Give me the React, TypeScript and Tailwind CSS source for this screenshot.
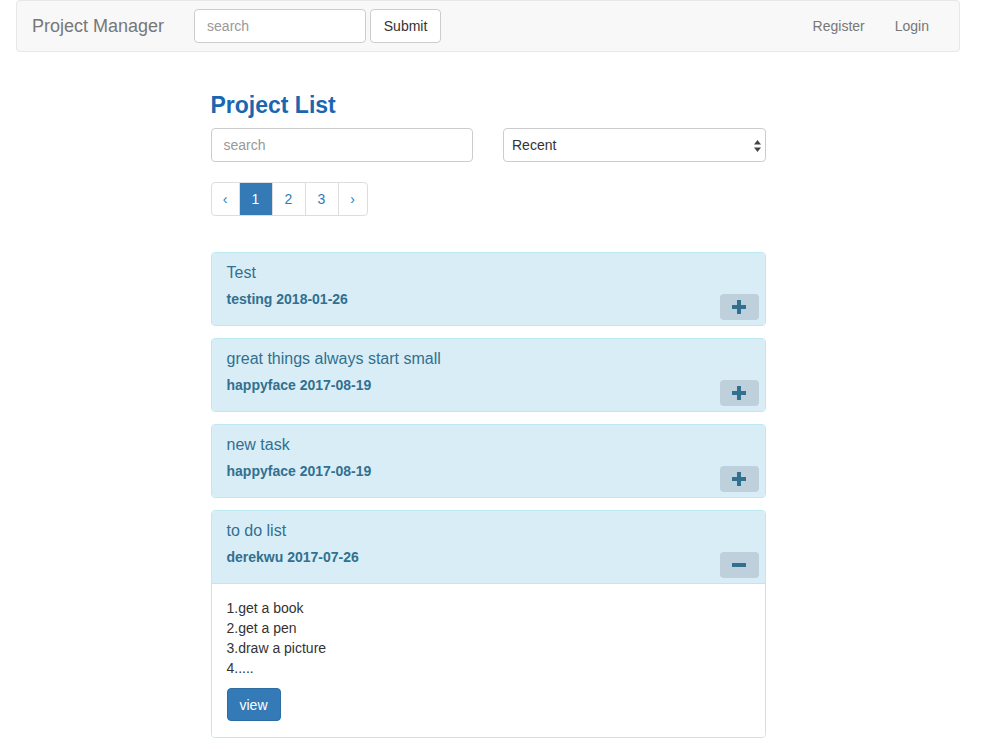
import React from 'react';

type Project = {
  title: string;
  author: string;
  date: string;
  open?: boolean;
  body?: string[];
};

const PROJECTS: Project[] = [
  { title: 'Test', author: 'testing', date: '2018-01-26' },
  { title: 'great things always start small', author: 'happyface', date: '2017-08-19' },
  { title: 'new task', author: 'happyface', date: '2017-08-19' },
  {
    title: 'to do list',
    author: 'derekwu',
    date: '2017-07-26',
    open: true,
    body: ['1.get a book', '2.get a pen', '3.draw a picture', '4.....'],
  },
];

const ToggleIcon: React.FC<{ open?: boolean }> = ({ open }) => (
  <svg width="14" height="14" viewBox="0 0 14 14" fill="#31708f">
    <rect x="0" y="5" width="14" height="4" />
    {!open && <rect x="5" y="0" width="4" height="14" />}
  </svg>
);

const Navbar: React.FC = () => (
  <nav className="mx-4 h-[52px] bg-[#f8f8f8] border border-[#e7e7e7] rounded-[4px] flex items-center">
    <span className="pl-[15px] pr-[30px] text-[18px] text-[#777]">Project Manager</span>
    <input
      placeholder="search"
      className="w-[172px] h-[34px] px-3 text-[14px] text-[#555] bg-white border border-[#ccc] rounded-[4px] placeholder:text-[#999] outline-none"
    />
    <button className="ml-1 h-[34px] w-[71px] text-[14px] text-[#333] bg-white border border-[#ccc] rounded-[4px]">
      Submit
    </button>
    <div className="ml-auto flex text-[14px] text-[#777]">
      <a className="px-[15px] leading-[20px]">Register</a>
      <a className="px-[15px] mr-[15px] leading-[20px]">Login</a>
    </div>
  </nav>
);

const Pagination: React.FC = () => {
  const base = 'h-[34px] flex items-center justify-center border border-[#ddd] -ml-px first:ml-0 text-[14px]';
  return (
    <div className="flex mt-5">
      <span className={`${base} w-[29px] rounded-l-[4px] text-[#337ab7] text-[12px]`}>‹</span>
      <span className={`${base} w-[34px] bg-[#337ab7] border-[#337ab7] text-white`}>1</span>
      <span className={`${base} w-[34px] text-[#337ab7]`}>2</span>
      <span className={`${base} w-[34px] text-[#337ab7]`}>3</span>
      <span className={`${base} w-[30px] rounded-r-[4px] text-[#337ab7] text-[12px]`}>›</span>
    </div>
  );
};

const ProjectPanel: React.FC<{ p: Project }> = ({ p }) => (
  <div className="border border-[#bce8f1] rounded-[4px] overflow-hidden">
    <div
      className={`flex items-end bg-[#d9edf7] text-[#31708f] pl-[15px] pr-[6px] pt-[10px] pb-[5px] ${
        p.open ? 'border-b border-[#bce8f1]' : ''
      }`}
    >
      <div className="flex-1 pb-[11px]">
        <div className="text-[16px] leading-[20px]">{p.title}</div>
        <div className="mt-[6px] text-[14px] leading-[20px] font-bold">
          {p.author} {p.date}
        </div>
      </div>
      <button className="w-[39px] h-[26px] bg-[#bdd0db] rounded-[4px] flex items-center justify-center">
        <ToggleIcon open={p.open} />
      </button>
    </div>
    {p.open && (
      <div className="bg-white px-[15px] pt-[14px] pb-[16px] text-[14px] leading-[20px] text-[#333]">
        {p.body?.map((line) => (
          <div key={line}>{line}</div>
        ))}
        <button className="mt-[10px] w-[54px] h-[33px] bg-[#337ab7] border border-[#2e6da4] rounded-[4px] text-white text-[14px]">
          view
        </button>
      </div>
    )}
  </div>
);

export default function App() {
  return (
    <div className="w-[976px] min-h-[749px] bg-white font-['Liberation_Sans',Arial,sans-serif] pb-10">
      <Navbar />

      <main className="mx-auto w-[555px]">
        <h1 className="mt-[39px] text-[23px] leading-[28px] font-bold text-[#1a66b0]">Project List</h1>

        <div className="mt-[9px] grid grid-cols-2 gap-[30px]">
          <input
            placeholder="search"
            className="h-[34px] px-3 text-[14px] text-[#555] bg-white border border-[#ccc] rounded-[4px] placeholder:text-[#999] outline-none"
          />
          <div className="relative h-[34px] border border-[#ccc] rounded-[4px] bg-white flex items-center pl-[8px] text-[14px] text-[#333]">
            Recent
            <svg className="absolute right-[4px] top-[11px]" width="7" height="12" viewBox="0 0 7 12" fill="#444">
              <path d="M3.5 0 L7 4.5 H0 Z" />
              <path d="M0 7.5 H7 L3.5 12 Z" />
            </svg>
          </div>
        </div>

        <Pagination />

        <div className="mt-9 flex flex-col gap-3">
          {PROJECTS.map((p) => (
            <ProjectPanel key={p.title} p={p} />
          ))}
        </div>
      </main>
    </div>
  );
}
